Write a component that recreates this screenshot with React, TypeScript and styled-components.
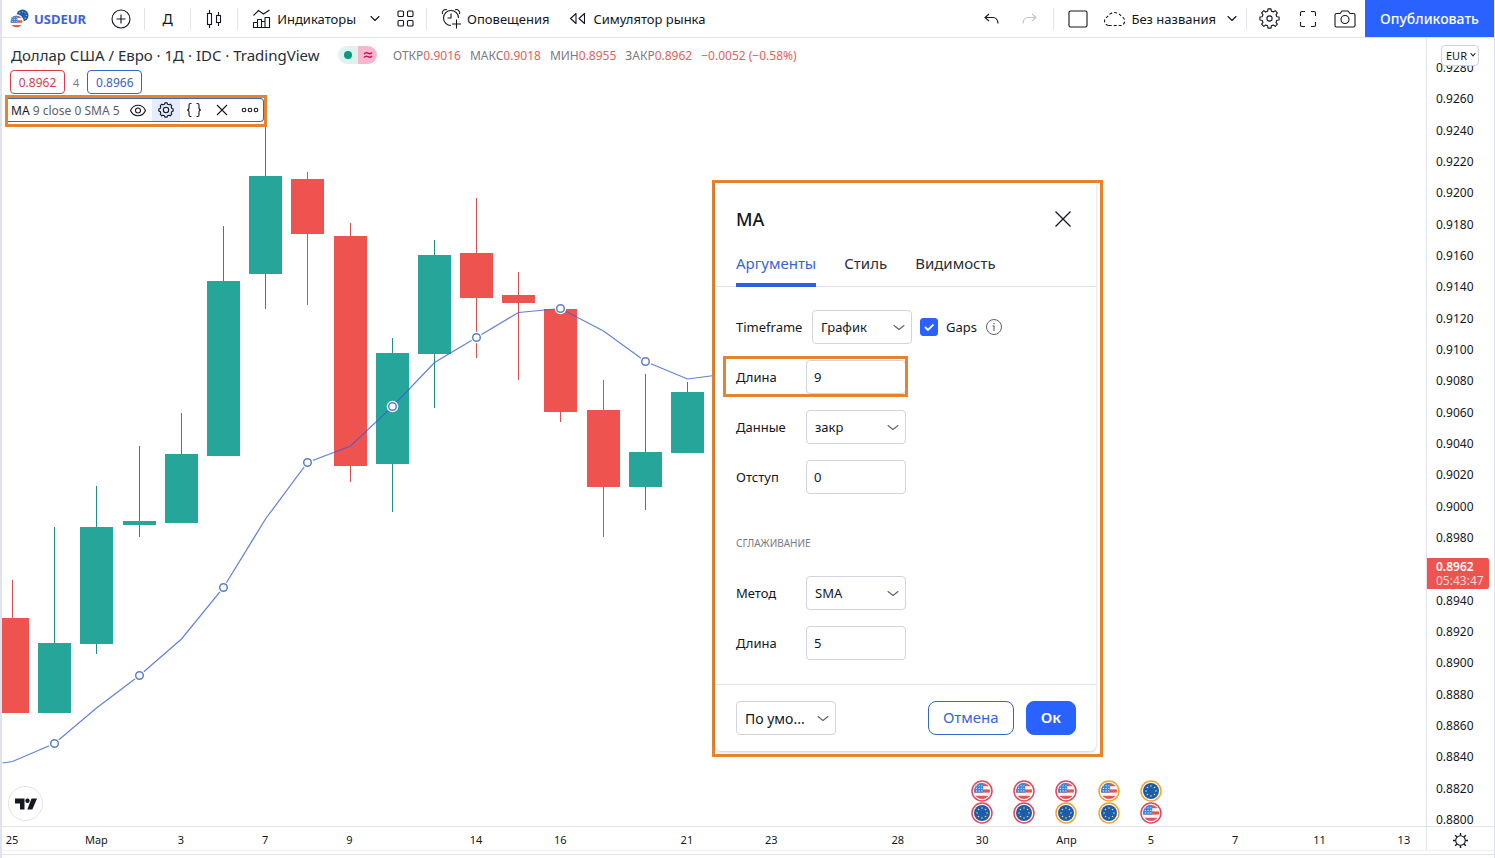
import React, { useState } from "react";
import styled, { createGlobalStyle, css } from "styled-components";

const ink = "#131722";
const muted = "#787b86";
const line = "#e0e3eb";
const blue = "#2962ff";
const red = "#ef5350";
const green = "#26a69a";
const orange = "#e6832f";

const GlobalStyle = createGlobalStyle`
  * { box-sizing: border-box; }
  body { margin: 0; background: #fff; overflow: hidden; }
  body, button, input, select {
    font-family: "Noto Sans", "Open Sans", sans-serif;
    color: ${ink};
  }
  button { border: 0; background: none; padding: 0; cursor: pointer; }
  svg { display: block; flex: none; }
`;

/* ---------- page shell ---------- */

const Page = styled.div`
  display: flex;
  flex-direction: column;
  height: 100vh;
  border-left: 2px solid ${line};
  border-right: 1px solid ${line};
`;

const Toolbar = styled.header`
  display: flex;
  justify-content: space-between;
  height: 38px;
  border-bottom: 1px solid ${line};
`;

const Group = styled.div`
  display: flex;
  align-items: center;
`;

const Separator = styled.span`
  width: 1px;
  height: 22px;
  background: ${line};
`;

const IconButton = styled.button<{ $w: number }>`
  display: flex;
  align-items: center;
  justify-content: center;
  width: ${(p) => p.$w}px;
  height: 37px;
  font-size: 14px;
`;

const ToolButton = styled.button<{ $gap: number; $left: number; $right: number }>`
  display: flex;
  align-items: center;
  gap: ${(p) => p.$gap}px;
  height: 37px;
  padding: 0 ${(p) => p.$right}px 0 ${(p) => p.$left}px;
  font-size: 13px;
  white-space: nowrap;
`;

const SymbolName = styled.span`
  font-weight: 700;
  color: #3c64d8;
`;

const UndoGroup = styled(Group)`
  padding-right: 5px;
`;

const PublishButton = styled.button`
  align-self: flex-start;
  width: 129px;
  height: 37px;
  background: ${blue};
  color: #fff;
  font-size: 14px;
  font-weight: 500;
`;

const Main = styled.main`
  display: grid;
  grid-template-columns: 1fr 68px;
  grid-template-rows: 1fr 24px;
  flex: 1;
  min-height: 0;
`;

const BottomBar = styled.footer`
  height: 8px;
  padding-top: 3px;
  border-top: 1px solid #f0f1f4;
`;

const BottomLine = styled.div`
  height: 1px;
  background: ${line};
`;

/* ---------- chart ---------- */

const ChartArea = styled.section`
  position: relative;
  overflow: hidden;
`;

const Plot = styled.svg`
  width: 100%;
  height: 100%;
`;

const Logo = styled.a`
  position: absolute;
  left: 6px;
  bottom: 5px;
  display: grid;
  place-items: center;
  width: 35px;
  height: 35px;
  border: 1px solid ${line};
  border-radius: 50%;
  background: #fff;
`;

const daySlots = css`
  display: grid;
  grid-template-columns: repeat(34, 1fr);
  margin: 0 1px 0 -11px;
`;

const Events = styled.div`
  ${daySlots}
  position: absolute;
  left: 0;
  right: 0;
  bottom: 2px;
`;

const EventStack = styled.div<{ $day: number }>`
  grid-column: ${(p) => p.$day + 1};
  grid-row: 1;
  display: flex;
  flex-direction: column;
  align-items: center;
`;

const PriceScale = styled.aside`
  position: relative;
  display: flex;
  flex-direction: column;
  justify-content: space-between;
  padding: 24px 0 0 9px;
  border-left: 1px solid ${line};
  overflow: hidden;
  font-size: 12px;
  line-height: 12px;

  > span { height: 12px; }
`;

const LastPrice = styled.div`
  position: absolute;
  top: 520px;
  left: 0;
  width: 62px;
  padding: 2px 0 1px 9px;
  border-radius: 0 2px 2px 0;
  background: ${red};
  color: #fbd9d8;
  line-height: 14px;

  strong { display: block; color: #fff; font-weight: 600; }
`;

const Currency = styled.div`
  position: absolute;
  top: 7px;
  left: 14px;
  width: 38px;

  select {
    appearance: none;
    width: 38px;
    height: 21px;
    padding: 0 0 0 4px;
    border: 1px solid #d1d4dc;
    border-radius: 4px;
    background: #fff;
    font-size: 11px;
  }
  svg { position: absolute; right: 3px; top: 7px; pointer-events: none; }
`;

const TimeScale = styled.div`
  border-top: 1px solid ${line};
  overflow: hidden;
`;

const Days = styled.div`
  ${daySlots}
`;

const Day = styled.span<{ $day: number }>`
  grid-column: ${(p) => p.$day + 1};
  grid-row: 1;
  justify-self: center;
  font-size: 11px;
  line-height: 25px;
  white-space: nowrap;
`;

const Corner = styled.div`
  display: grid;
  place-items: center;
  padding-top: 4px;
  border-top: 1px solid ${line};
  border-left: 1px solid ${line};
`;

/* ---------- legend ---------- */

const Legend = styled.div`
  position: absolute;
  top: 6px;
  left: 3px;
  display: flex;
  flex-direction: column;
  align-items: flex-start;
`;

const TitleRow = styled.div`
  display: flex;
  align-items: center;
  height: 22px;
  padding-left: 6px;
  white-space: nowrap;

  h1 {
    width: 327px;
    margin: 0;
    font-size: 15px;
    line-height: 20px;
    font-weight: 400;
    color: #2a2e39;
  }
`;

const Status = styled.div`
  display: grid;
  grid-template-columns: 20px 19px;
  height: 18px;
  border-radius: 9px;
  overflow: hidden;

  span { display: grid; place-items: center; background: #dff3ee; }
  span + span { background: #f8b6cf; }
`;

const Ohlc = styled.div`
  display: flex;
  gap: 9px;
  margin-left: 16px;
  font-size: 12px;
  color: ${muted};

  b { font-weight: 400; color: #e8605e; }
`;

const QuoteRow = styled.div`
  display: flex;
  align-items: center;
  gap: 8px;
  height: 24px;
  margin: 4px 0 1px 5px;
  font-size: 11px;
  color: ${muted};
`;

const Quote = styled.button<{ $color: string }>`
  width: 55px;
  height: 24px;
  border: 1px solid ${(p) => p.$color};
  border-radius: 4px;
  background: #fff;
  color: ${(p) => p.$color};
  font-size: 12px;
`;

const StudyFrame = styled.div`
  width: 262px;
  height: 32px;
  padding-bottom: 2px;
  border: 3px solid ${orange};
  background: #fff;
`;

const Study = styled.div`
  display: flex;
  align-items: center;
  height: 24px;
  border: solid #3f6a9c;
  border-width: 1px 1px 1px 0;
  border-radius: 0 4px 4px 0;
  padding-left: 3px;
  font-size: 12px;
  color: #5d606b;
  white-space: nowrap;

  span { flex: none; width: 113px; }
  b { font-weight: 400; color: ${ink}; }
`;

const StudyButton = styled.button<{ $active?: boolean }>`
  flex: none;
  display: grid;
  place-items: center;
  width: 28px;
  height: 22px;
  background: ${(p) => (p.$active ? "#e3edfd" : "transparent")};
`;

/* ---------- dialog ---------- */

const DialogFrame = styled.div`
  position: absolute;
  top: 142px;
  left: 710px;
  width: 391px;
  padding: 0 4px 3px 0;
  border: 3px solid ${orange};
  background: #fff;
`;

const Dialog = styled.form`
  border-radius: 0 0 6px 6px;
  box-shadow: 0 1px 3px rgba(0, 0, 0, 0.22);
  background: #fff;
`;

const DialogHead = styled.div`
  display: flex;
  align-items: center;
  justify-content: space-between;
  height: 59px;
  padding: 13px 19px 0 21px;

  h2 { margin: 0; font-size: 18px; font-weight: 500; }
`;

const Tabs = styled.div`
  display: flex;
  gap: 28px;
  padding: 0 21px;
  border-bottom: 1px solid ${line};
`;

const Tab = styled.button<{ $active: boolean }>`
  height: 45px;
  margin-bottom: -1px;
  border-bottom: 4px solid ${(p) => (p.$active ? "#2f5fe0" : "transparent")};
  color: ${(p) => (p.$active ? "#3565dd" : "#2a2e39")};
  font-size: 15px;
`;

const Fields = styled.div`
  display: flex;
  flex-direction: column;
  gap: 16px;
  padding: 23px 21px 24px;
  font-size: 13px;

  h3 {
    margin: 25px 0 9px;
    font-size: 10px;
    line-height: 16px;
    font-weight: 400;
    color: ${muted};
  }
`;

const FieldRow = styled.div`
  position: relative;
  display: flex;
  align-items: center;
  gap: 8px;
`;

const Label = styled.label<{ $wide?: boolean }>`
  width: ${(p) => (p.$wide ? 68 : 62)}px;
`;

const control = css`
  width: 100px;
  height: 34px;
  padding: 0 7px;
  border: 1px solid #d1d4dc;
  border-radius: 4px;
  background: #fff;
`;

const TextInput = styled.input`
  ${control}
  font-size: 13px;
`;

const SelectBox = styled.div<{ $size?: number }>`
  position: relative;

  select {
    ${control}
    display: block;
    appearance: none;
    padding: 0 24px 0 8px;
    font-size: ${(p) => p.$size ?? 13}px;
  }
  svg { position: absolute; right: 7px; top: 14px; pointer-events: none; }
`;

const Check = styled.label`
  display: flex;
  align-items: center;
  gap: 8px;

  input {
    appearance: none;
    width: 18px;
    height: 18px;
    margin: 0;
    border: 1px solid #d1d4dc;
    border-radius: 3px;
  }
  input:checked { background: ${blue}; border-color: ${blue}; }
`;

const Tick = styled.span`
  position: relative;
  display: block;
  height: 18px;

  svg { position: absolute; inset: 0; pointer-events: none; }
`;

const Highlight = styled.div`
  position: absolute;
  top: -4px;
  left: -13px;
  width: 185px;
  height: 41px;
  border: 3px solid ${orange};
  pointer-events: none;
`;

const DialogFoot = styled.div`
  display: flex;
  align-items: center;
  gap: 12px;
  padding: 16px 20px 16px 21px;
  border-top: 1px solid ${line};

  > :first-child { margin-right: auto; }
`;

const Action = styled.button<{ $primary?: boolean }>`
  height: 34px;
  padding: 0 14px 2px;
  border: 1px solid ${(p) => (p.$primary ? blue : "#3565c8")};
  border-radius: 8px;
  background: ${(p) => (p.$primary ? blue : "#fff")};
  color: ${(p) => (p.$primary ? "#fff" : "#3565dd")};
  font-size: 15px;
  font-weight: ${(p) => (p.$primary ? 600 : 400)};
`;

/* ---------- icons ---------- */

type IconProps = { w: number; h: number; children: React.ReactNode; stroke?: string };

const Icon = ({ w, h, children, stroke = ink }: IconProps) => (
  <svg width={w} height={h} viewBox={`0 0 ${w} ${h}`} fill="none" stroke={stroke} strokeWidth="1.1" aria-hidden="true">
    {children}
  </svg>
);

const Chevron = ({ w = 10, stroke = ink }: { w?: number; stroke?: string }) => (
  <Icon w={w} h={7} stroke={stroke}>
    <path d={`M1 1.5 L${w / 2} ${w > 7 ? 5.5 : 4} L${w - 1} 1.5`} strokeLinecap="round" strokeLinejoin="round" />
  </Icon>
);

function gearPath(c: number, outer: number, inner: number, teeth: number) {
  const pts: string[] = [];
  const step = (Math.PI * 2) / teeth;
  for (let i = 0; i < teeth; i++) {
    const a = i * step - Math.PI / 2;
    const marks: [number, number][] = [[-0.31, inner], [-0.2, outer], [0.2, outer], [0.31, inner]];
    marks.forEach(([k, r]) => pts.push(`${(c + r * Math.cos(a + k * step)).toFixed(2)} ${(c + r * Math.sin(a + k * step)).toFixed(2)}`));
  }
  return `M${pts.join("L")}Z`;
}

const Star = ({ x, y, r }: { x: number; y: number; r: number }) => <circle cx={x} cy={y} r={r} fill="#e8e27a" />;

const EuDisc = ({ cx, cy, r }: { cx: number; cy: number; r: number }) => (
  <g stroke="none">
    <circle cx={cx} cy={cy} r={r} fill="#1d5cab" />
    {Array.from({ length: 8 }, (_, i) => {
      const a = (i * Math.PI) / 4;
      return <Star key={i} x={cx + r * 0.62 * Math.cos(a)} y={cy + r * 0.62 * Math.sin(a)} r={r * 0.1} />;
    })}
  </g>
);

const UsDisc = ({ cx, cy, r, id }: { cx: number; cy: number; r: number; id: string }) => (
  <g stroke="none">
    <clipPath id={id}><circle cx={cx} cy={cy} r={r} /></clipPath>
    <g clipPath={`url(#${id})`}>
      <rect x={cx - r} y={cy - r} width={r * 2} height={r * 2} fill="#fbf3f2" />
      {[0, 2, 4].map((i) => (
        <rect key={i} x={cx - r} y={cy - r + (i * r * 2) / 5} width={r * 2} height={(r * 2) / 5} fill="#e0574f" />
      ))}
      <rect x={cx - r} y={cy - r} width={r * 1.15} height={r * 1.2} fill="#3f86d8" />
      {[0, 1, 2].map((i) => [0, 1, 2].map((j) => (
        <circle key={`${i}${j}`} cx={cx - r * 0.7 + i * r * 0.34} cy={cy - r * 0.65 + j * r * 0.32} r={r * 0.07} fill="#fff" />
      )))}
    </g>
  </g>
);

const PairIcon = () => (
  <svg width="19" height="20" viewBox="0 0 19 20" aria-hidden="true">
    <EuDisc cx={12.5} cy={6.5} r={6} />
    <circle cx="6.5" cy="12.5" r="7.2" fill="#fff" />
    <UsDisc cx={6.5} cy={12.5} r={6} id="pair-us" />
  </svg>
);

const EventIcon = ({ flag, ring, id }: { flag: "us" | "eu"; ring: string; id: string }) => (
  <svg width="22" height="22" viewBox="0 0 22 22" aria-hidden="true">
    <circle cx="11" cy="11" r="10" fill="#fff" stroke={ring} strokeWidth="1.5" />
    {flag === "us" ? <UsDisc cx={11} cy={11} r={8} id={id} /> : <EuDisc cx={11} cy={11} r={8} />}
  </svg>
);

/* ---------- data ---------- */

type Candle = [x: number, up: boolean, high: number, top: number, bottom: number, low: number];

const candles: Candle[] = [
  [12, false, 580, 618, 713, 713],
  [54, true, 527, 643, 713, 713],
  [96, true, 486, 527, 644, 654],
  [139, true, 446, 521, 525, 537],
  [181, true, 413, 454, 523, 523],
  [223, true, 226, 281, 456, 456],
  [265, true, 110, 176, 274, 309],
  [307, false, 172, 179, 234, 305],
  [350, false, 223, 236, 466, 482],
  [392, true, 338, 353, 464, 512],
  [434, true, 240, 255, 354, 408],
  [476, false, 198, 253, 298, 358],
  [518, false, 272, 295, 303, 380],
  [560, false, 309, 309, 412, 422],
  [603, false, 380, 410, 487, 537],
  [645, true, 374, 452, 487, 510],
  [687, true, 382, 392, 453, 453],
  [729, false, 385, 391, 406, 410],
];

const average = "2,763 12,761.5 54,743.5 96,708 139,675.5 181,639 223,587.5 265,519 307,462.5 350,446 392,406.5 434,362.5 476,337.5 518,312.5 560,308.5 603,331 645,361.5 687,379 729,373.5";
const anchors: [number, number][] = [[54, 743.5], [139, 675.5], [223, 587.5], [307, 462.5], [392, 406.5], [476, 337.5], [560, 308.5], [645, 361.5]];

const days: [number, string][] = [
  [0, "25"], [2, "Мар"], [4, "3"], [6, "7"], [8, "9"], [11, "14"], [13, "16"], [16, "21"], [18, "23"],
  [21, "28"], [23, "30"], [25, "Апр"], [27, "5"], [29, "7"], [31, "11"], [33, "13"],
];

const ringRed = "#e0465e";
const ringGold = "#f0a32c";
const events: [number, ["us" | "eu", string], ["us" | "eu", string]][] = [
  [23, ["us", ringRed], ["eu", ringRed]],
  [24, ["us", ringRed], ["eu", ringRed]],
  [25, ["us", ringRed], ["eu", ringGold]],
  [26, ["us", ringGold], ["eu", ringGold]],
  [27, ["eu", ringGold], ["us", ringRed]],
];

/* The slot under the last-price tag stays empty. */
const taggedSlot = 16;
const prices = Array.from({ length: 25 }, (_, i) => (i === taggedSlot ? "" : (0.928 - i * 0.002).toFixed(4)));

const ohlc: [string, string][] = [["ОТКР", "0.9016"], ["МАКС", "0.9018"], ["МИН", "0.8955"], ["ЗАКР", "0.8962"], ["", "−0.0052 (−0.58%)"]];

/* ---------- sections ---------- */

const TopToolbar = () => (
  <Toolbar>
    <Group>
      <ToolButton $gap={5} $left={8} $right={12}>
        <PairIcon />
        <SymbolName>USDEUR</SymbolName>
      </ToolButton>
      <IconButton $w={46} aria-label="Сравнить">
        <Icon w={20} h={20}><circle cx="10" cy="10" r="9" /><path d="M10 5.5v9M5.5 10h9" /></Icon>
      </IconButton>
      <Separator />
      <IconButton $w={45}>Д</IconButton>
      <Separator />
      <IconButton $w={46} aria-label="Свечи">
        <Icon w={16} h={20}>
          <rect x="1.5" y="4.5" width="4" height="11" /><path d="M3.5 1v3.5M3.5 15.5V19" />
          <rect x="10.5" y="6.5" width="4" height="7" /><path d="M12.5 3v3.5M12.5 13.5V17" />
        </Icon>
      </IconButton>
      <Separator />
      <ToolButton $gap={6} $left={14} $right={10}>
        <Icon w={19} h={20}>
          <path d="M1.5 6.500 6.500 1.500 11.500 5 17.500 1" />
          <path d="M1.500 18.500v-5h4v5zM5.500 18.500v-8h4v8M9.500 18.500v-6h3.500v6M13 18.500v-10h4.500v10zM1.500 18.500h16" strokeLinejoin="round" />
        </Icon>
        Индикаторы
      </ToolButton>
      <IconButton $w={18} aria-label="Избранные индикаторы"><Chevron /></IconButton>
      <IconButton $w={42} aria-label="Шаблоны">
        <Icon w={17} h={17}>
          <rect x="1" y="1" width="5.500" height="5.500" rx="1" /><rect x="10.500" y="1" width="5.500" height="5.500" rx="1" />
          <rect x="1" y="10.500" width="5.500" height="5.500" rx="1" /><rect x="10.500" y="10.500" width="5.500" height="5.500" rx="1" />
        </Icon>
      </IconButton>
      <Separator />
      <ToolButton $gap={5} $left={14} $right={10}>
        <Icon w={21} h={21}>
          <path d="M17.500 10A7.500 7.500 0 1 0 10 17.500" />
          <path d="M10 5.500V10H6.500M1.500 6C.5 3.500 3 .8 6 1.800M14 1.800C17 .8 19.500 3.500 18.500 6M15.500 11.500v9M11 16h9" />
        </Icon>
        Оповещения
      </ToolButton>
      <ToolButton $gap={7} $left={10} $right={10}>
        <Icon w={17} h={13}>
          <path d="M7 1.500v10L1.500 6.500zM15.500 1.500v10L10 6.500z" strokeLinejoin="round" />
        </Icon>
        Симулятор рынка
      </ToolButton>
    </Group>
    <Group>
      <UndoGroup>
        <IconButton $w={38} aria-label="Отменить">
          <Icon w={15} h={12}><path d="M5 1 1 4.500 5 8M1 4.500h8Q13.500 4.500 14 10.500" /></Icon>
        </IconButton>
        <IconButton $w={38} aria-label="Повторить">
          <Icon w={15} h={12} stroke="#c1c4cd"><path d="M10 1l4 3.500L10 8M14 4.500H6Q1.500 4.500 1 10.500" /></Icon>
        </IconButton>
      </UndoGroup>
      <Separator />
      <IconButton $w={47} aria-label="Макет">
        <Icon w={20} h={18}><rect x="1" y="1" width="18" height="16" rx="1.500" /></Icon>
      </IconButton>
      <ToolButton $gap={4} $left={2} $right={2}>
        <Icon w={24} h={17}>
          <path d="M5.500 15.500A4.500 4.500 0 0 1 4.500 6.800 8 8 0 0 1 18.500 6.500 4.800 4.800 0 0 1 18.500 15.500Z" strokeDasharray="3 2" />
        </Icon>
        Без названия
      </ToolButton>
      <IconButton $w={28} aria-label="Сохранённые графики"><Chevron /></IconButton>
      <Separator />
      <IconButton $w={45} aria-label="Настройки">
        <Icon w={21} h={21}><path d={gearPath(10.5, 9.7, 7.6, 8)} strokeLinejoin="round" /><circle cx="10.500" cy="10.500" r="2.600" /></Icon>
      </IconButton>
      <IconButton $w={32} aria-label="Во весь экран">
        <Icon w={18} h={18}>
          <path d="M1.500 6V3a1.500 1.500 0 0 1 1.500-1.500h3M12 1.500h3A1.500 1.500 0 0 1 16.500 3v3M16.500 12v3a1.500 1.500 0 0 1-1.500 1.500h-3M6 16.500H3A1.500 1.500 0 0 1 1.500 15v-3" />
        </Icon>
      </IconButton>
      <IconButton $w={41} aria-label="Снимок">
        <Icon w={22} h={18}>
          <path d="M2.500 3.500H6L8 1h6l2 2.500h3.500A1.500 1.500 0 0 1 21 5v10.500a1.500 1.500 0 0 1-1.500 1.500h-17A1.500 1.500 0 0 1 1 15.500V5a1.500 1.500 0 0 1 1.500-1.500z" />
          <circle cx="11" cy="9.500" r="4" />
        </Icon>
      </IconButton>
      <PublishButton>Опубликовать</PublishButton>
    </Group>
  </Toolbar>
);

const ChartLegend = () => (
  <Legend>
    <TitleRow>
      <h1>Доллар США / Евро · 1Д · IDC · TradingView</h1>
      <Status>
        <span><Icon w={8} h={8}><circle cx="4" cy="4" r="4" fill="#089981" stroke="none" /></Icon></span>
        <span>
          <Icon w={10} h={8} stroke="#c2185b"><path d="M1 3Q3 .8 5 2.200T9 1.500M1 6.500Q3 4.300 5 5.700T9 5" strokeWidth="1.500" /></Icon>
        </span>
      </Status>
      <Ohlc>
        {ohlc.map(([name, value]) => <span key={value}>{name}<b>{value}</b></span>)}
      </Ohlc>
    </TitleRow>
    <QuoteRow>
      <Quote $color="#d93b4b">0.8962</Quote>
      4
      <Quote $color="#3565c8">0.8966</Quote>
    </QuoteRow>
    <StudyFrame>
      <Study>
        <span><b>MA</b> 9 close 0 SMA 5</span>
        <StudyButton aria-label="Скрыть">
          <Icon w={18} h={13}><path d="M1.500 6.500C4.500 -.5 13.500 -.5 16.500 6.500 13.500 13.500 4.500 13.500 1.500 6.500z" /><circle cx="9" cy="6.500" r="2.500" /></Icon>
        </StudyButton>
        <StudyButton $active aria-label="Настройки индикатора">
          <Icon w={16} h={16}><path d={gearPath(8, 7.2, 6, 8)} strokeLinejoin="round" /><circle cx="8" cy="8" r="2.700" /></Icon>
        </StudyButton>
        <StudyButton aria-label="Исходный код">
          <Icon w={18} h={16}>
            <path d="M6.500 1.500H5.500Q4 1.500 4 3v3Q4 8 2 8 4 8 4 10v3Q4 14.500 5.500 14.500h1M11.500 1.500h1q1.500 0 1.500 1.500v3q0 2 2 2-2 0-2 2v3q0 1.500-1.500 1.500h-1" />
          </Icon>
        </StudyButton>
        <StudyButton aria-label="Удалить">
          <Icon w={12} h={12}><path d="M1 1l10 10M11 1 1 11" /></Icon>
        </StudyButton>
        <StudyButton aria-label="Ещё">
          <Icon w={18} h={6}><circle cx="3" cy="3" r="1.800" /><circle cx="9" cy="3" r="1.800" /><circle cx="15" cy="3" r="1.800" /></Icon>
        </StudyButton>
      </Study>
    </StudyFrame>
  </Legend>
);

const PricePlot = () => (
  <Plot role="img" aria-label="График USDEUR">
    <g transform="translate(-2 -38)">
      {candles.map(([x, up, high, top, bottom, low]) => (
        <g key={x} fill={up ? green : red}>
          <rect x={x} y={high} width="1" height={low - high} fill={up ? "#1f8f84" : "#d8524f"} />
          <rect x={x - 16} y={top} width="33" height={bottom - top} />
        </g>
      ))}
      <g transform="translate(.5 0)">
        <polyline points={average} fill="none" stroke="#3a62d2" strokeOpacity="0.8" strokeWidth="1.200" />
        {anchors.map(([x, y]) => (
          <g key={x}>
            <circle cx={x} cy={y} r="5.800" fill="#fff" />
            <circle cx={x} cy={y} r="3.800" fill="#fff" stroke="#5b7fc4" strokeWidth="1.500" />
          </g>
        ))}
      </g>
    </g>
  </Plot>
);

const Select = ({ id, options, size, label }: { id: string; options: string[]; size?: number; label?: string }) => (
  <SelectBox $size={size}>
    <select id={id} aria-label={label}>
      {options.map((o) => <option key={o}>{o}</option>)}
    </select>
    <Chevron w={12} stroke="#5d606b" />
  </SelectBox>
);

const SettingsDialog = () => {
  const [tab, setTab] = useState("Аргументы");
  return (
    <DialogFrame>
      <Dialog role="dialog" aria-label="MA" onSubmit={(e) => e.preventDefault()}>
        <DialogHead>
          <h2>MA</h2>
          <IconButton type="button" $w={28} aria-label="Закрыть">
            <Icon w={16} h={16}><path d="M.5 .5l15 15M15.500 .5l-15 15" strokeWidth="1.300" /></Icon>
          </IconButton>
        </DialogHead>
        <Tabs role="tablist">
          {["Аргументы", "Стиль", "Видимость"].map((name) => (
            <Tab key={name} type="button" role="tab" aria-selected={tab === name} $active={tab === name} onClick={() => setTab(name)}>
              {name}
            </Tab>
          ))}
        </Tabs>
        <Fields>
          <FieldRow>
            <Label htmlFor="timeframe" $wide>Timeframe</Label>
            <Select id="timeframe" options={["График", "1 день", "1 неделя"]} />
            <Check>
              <Tick>
                <input type="checkbox" defaultChecked />
                <Icon w={18} h={18} stroke="#fff"><path d="M5 9l3 3 5.500-5.500" strokeWidth="1.800" /></Icon>
              </Tick>
              Gaps
            </Check>
            <Icon w={18} h={18} stroke="#5d606b">
              <circle cx="9" cy="9" r="7.500" strokeWidth="1" /><path d="M7.500 8h1.500v5M9 5v1.300" />
            </Icon>
          </FieldRow>
          <FieldRow>
            <Label htmlFor="length">Длина</Label>
            <TextInput id="length" defaultValue="9" />
            <Highlight />
          </FieldRow>
          <FieldRow>
            <Label htmlFor="source">Данные</Label>
            <Select id="source" options={["закр", "откр", "макс", "мин"]} />
          </FieldRow>
          <FieldRow>
            <Label htmlFor="offset">Отступ</Label>
            <TextInput id="offset" defaultValue="0" />
          </FieldRow>
          <h3>СГЛАЖИВАНИЕ</h3>
          <FieldRow>
            <Label htmlFor="method">Метод</Label>
            <Select id="method" options={["SMA", "EMA", "WMA"]} />
          </FieldRow>
          <FieldRow>
            <Label htmlFor="smoothing">Длина</Label>
            <TextInput id="smoothing" defaultValue="5" />
          </FieldRow>
        </Fields>
        <DialogFoot>
          <Select id="defaults" label="Шаблон настроек" options={["По умо..."]} size={14} />
          <Action type="button">Отмена</Action>
          <Action type="submit" $primary>Ок</Action>
        </DialogFoot>
      </Dialog>
    </DialogFrame>
  );
};

export default function App() {
  return (
    <Page>
      <GlobalStyle />
      <TopToolbar />
      <Main>
        <ChartArea>
          <PricePlot />
          <Events>
            {events.map(([day, first, second]) => (
              <EventStack key={day} $day={day}>
                <EventIcon flag={first[0]} ring={first[1]} id={`a${day}`} />
                <EventIcon flag={second[0]} ring={second[1]} id={`b${day}`} />
              </EventStack>
            ))}
          </Events>
          <Logo href="#" aria-label="TradingView">
            <svg width="22" height="12" viewBox="0 0 22 12" fill={ink} aria-hidden="true">
              <path d="M0 .5h9.500v11H5V5.500H0z" /><circle cx="12.500" cy="2.800" r="2.200" /><path d="M16.500 .5H22l-4.700 11h-5z" />
            </svg>
          </Logo>
          <ChartLegend />
          <SettingsDialog />
        </ChartArea>
        <PriceScale>
          {prices.map((p, i) => <span key={i}>{p}</span>)}
          <LastPrice><strong>0.8962</strong>05:43:47</LastPrice>
          <Currency>
            <select aria-label="Валюта"><option>EUR</option><option>USD</option></select>
            <Chevron w={6} />
          </Currency>
        </PriceScale>
        <TimeScale>
          <Days>
            {days.map(([day, text]) => <Day key={day} $day={day}>{text}</Day>)}
          </Days>
        </TimeScale>
        <Corner>
          <Icon w={17} h={17}>
            <circle cx="8.500" cy="8.500" r="4.800" />
            <path d="M8.500 3.500V1M8.500 13.500V16M3.500 8.500H1M13.500 8.500H16M5 5 3.200 3.200M12 5l1.800-1.800M5 12l-1.800 1.800M12 12l1.800 1.800" strokeWidth="1.400" />
          </Icon>
        </Corner>
      </Main>
      <BottomBar><BottomLine /></BottomBar>
    </Page>
  );
}
